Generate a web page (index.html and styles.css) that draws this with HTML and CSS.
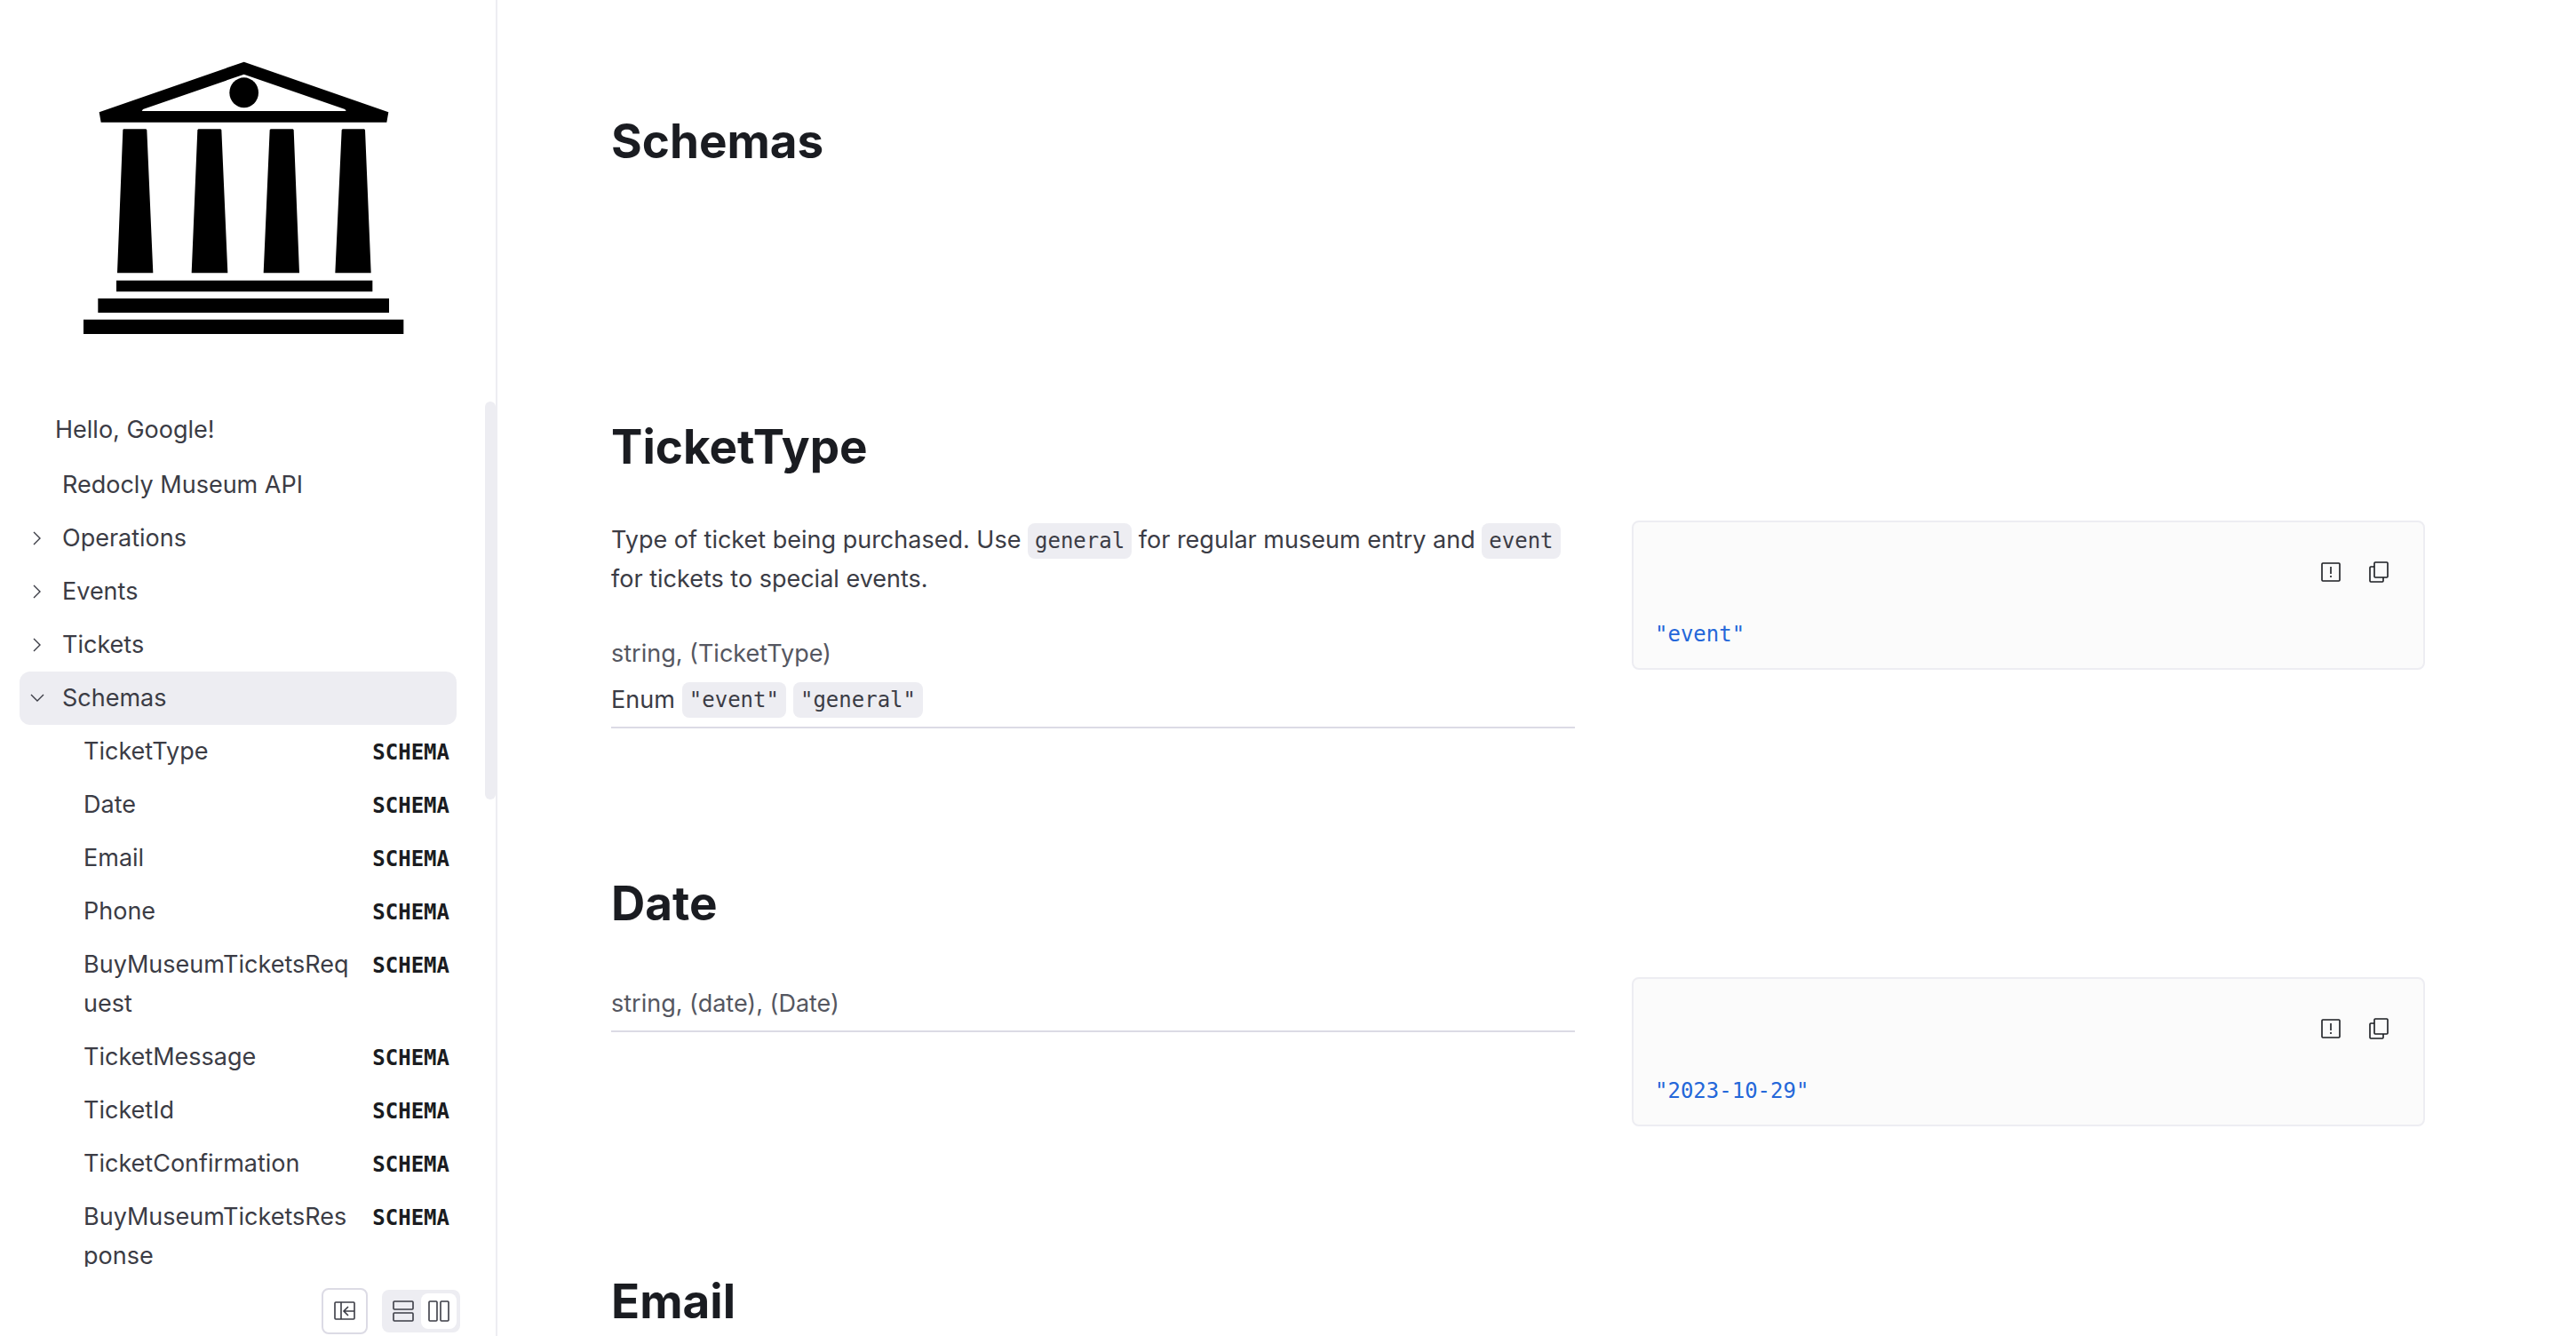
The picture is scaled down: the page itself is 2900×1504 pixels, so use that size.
FILE: index.html
```html
<!DOCTYPE html>
<html lang="en">
<head>
<meta charset="utf-8">
<title>Redocly Museum API</title>
<link rel="stylesheet" href="styles.css">
</head>
<body>
<div class="app">
  <aside class="sidebar">
    <a class="logo" href="#" aria-label="Museum">
      <svg viewBox="0 0 1086 924" aria-hidden="true">
        <path fill-rule="evenodd" d="M545 2 1033 172 1027 206 62 206 56 172ZM545 44 204 162 200 168 890 168 886 162Z"/>
        <ellipse cx="545" cy="106" rx="49" ry="51"/>
        <path d="M138 229H214L217 232 238 715H117L136 232ZM391 229H466L469 232 490 715H368L388 232ZM635 229H710L713 232 732 715H611L632 232ZM878 229H951L954 232 974 715H853L875 232Z"/>
        <path d="M114 740H979V778H114ZM52 801H1035V849H52ZM3 872H1084V921H3Z"/>
      </svg>
    </a>
    <div class="menu-area">
      <nav class="menu">
        <a class="item item-page" href="#">Hello, Google!</a>
        <a class="item item-top" href="#">Redocly Museum API</a>
        <button class="item item-group" type="button"><svg class="chevron" viewBox="0 0 16 16"><path d="M4 1 11 8 4 15"/></svg>Operations</button>
        <button class="item item-group" type="button"><svg class="chevron" viewBox="0 0 16 16"><path d="M4 1 11 8 4 15"/></svg>Events</button>
        <button class="item item-group" type="button"><svg class="chevron" viewBox="0 0 16 16"><path d="M4 1 11 8 4 15"/></svg>Tickets</button>
        <button class="item item-group is-open" type="button" aria-expanded="true"><svg class="chevron" viewBox="0 0 16 16"><path d="M1 4 8 11 15 4"/></svg>Schemas</button>
        <a class="item item-child" href="#tickettype"><span class="name">TicketType</span><span class="badge">SCHEMA</span></a>
        <a class="item item-child" href="#date"><span class="name">Date</span><span class="badge">SCHEMA</span></a>
        <a class="item item-child" href="#email"><span class="name">Email</span><span class="badge">SCHEMA</span></a>
        <a class="item item-child" href="#"><span class="name">Phone</span><span class="badge">SCHEMA</span></a>
        <a class="item item-child" href="#"><span class="name">BuyMuseumTicketsRequest</span><span class="badge">SCHEMA</span></a>
        <a class="item item-child" href="#"><span class="name">TicketMessage</span><span class="badge">SCHEMA</span></a>
        <a class="item item-child" href="#"><span class="name">TicketId</span><span class="badge">SCHEMA</span></a>
        <a class="item item-child" href="#"><span class="name">TicketConfirmation</span><span class="badge">SCHEMA</span></a>
        <a class="item item-child" href="#"><span class="name">BuyMuseumTicketsResponse</span><span class="badge">SCHEMA</span></a>
      </nav>
      <div class="thumb"></div>
    </div>
    <div class="controls">
      <button class="collapse" type="button" aria-label="Collapse sidebar">
        <svg class="icon" viewBox="0 0 24 24"><rect x="1" y="2" width="22" height="19" rx="1"/><path d="M8 2V21M23 12H12M16 7 11 12 16 17"/></svg>
      </button>
      <div class="views">
        <button class="view" type="button" aria-label="Stacked layout">
          <svg class="icon" viewBox="0 0 24 24"><rect x="1" y="1" width="22" height="9" rx="1"/><rect x="1" y="14" width="22" height="9" rx="1"/></svg>
        </button>
        <button class="view is-active" type="button" aria-label="Three panel layout">
          <svg class="icon" viewBox="0 0 24 24"><rect x="1" y="1" width="9" height="22" rx="1"/><rect x="14" y="1" width="9" height="22" rx="1"/></svg>
        </button>
      </div>
    </div>
  </aside>

  <main class="content">
    <section class="intro">
      <h1 class="title">Schemas</h1>
    </section>

    <section class="schema" id="tickettype">
      <h2 class="title">TicketType</h2>
      <div class="columns">
        <div class="details">
          <p class="description">Type of ticket being purchased. Use <code class="chip">general</code> for regular museum entry and <code class="chip">event</code> for tickets to special events.</p>
          <div class="definition">
            <div class="type">string, (TicketType)</div>
            <div class="enum">Enum <code class="chip">"event"</code><code class="chip">"general"</code></div>
          </div>
        </div>
        <div class="sample">
          <div class="tools">
            <button class="tool" type="button" aria-label="Report"><svg class="icon" viewBox="0 0 24 24"><rect x="2" y="2" width="20" height="20" rx="1"/><path d="M12 6V14M12 16V18"/></svg></button>
            <button class="tool" type="button" aria-label="Copy"><svg class="icon" viewBox="0 0 24 24"><rect x="7" y="1" width="15" height="17" rx="1"/><path d="M7 6H3Q2 6 2 7V22Q2 23 3 23H16Q17 23 17 22V18"/></svg></button>
          </div>
          <pre class="value"><code>"event"</code></pre>
        </div>
      </div>
    </section>

    <section class="schema" id="date">
      <h2 class="title">Date</h2>
      <div class="columns">
        <div class="details">
          <div class="definition">
            <div class="type">string, (date), (Date)</div>
          </div>
        </div>
        <div class="sample">
          <div class="tools">
            <button class="tool" type="button" aria-label="Report"><svg class="icon" viewBox="0 0 24 24"><rect x="2" y="2" width="20" height="20" rx="1"/><path d="M12 6V14M12 16V18"/></svg></button>
            <button class="tool" type="button" aria-label="Copy"><svg class="icon" viewBox="0 0 24 24"><rect x="7" y="1" width="15" height="17" rx="1"/><path d="M7 6H3Q2 6 2 7V22Q2 23 3 23H16Q17 23 17 22V18"/></svg></button>
          </div>
          <pre class="value"><code>"2023-10-29"</code></pre>
        </div>
      </div>
    </section>

    <section class="schema" id="email">
      <h2 class="title">Email</h2>
    </section>
  </main>
</div>
</body>
</html>
```
FILE: styles.css
```css
:root {
  --text: #3b3c45;
  --strong: #1a1c21;
  --muted: #555761;
  --tint: #ededf2;
  --line: #dcdbe5;
  --mono: "DejaVu Sans Mono", monospace;
}

* {
  box-sizing: border-box;
}

body {
  margin: 0;
  background: #fff;
  color: var(--text);
  font: 27px/44px Inter, sans-serif;
}

button {
  margin: 0;
  padding: 0;
  border: 0;
  background: none;
  color: inherit;
  font: inherit;
  text-align: left;
}

a {
  color: inherit;
  text-decoration: none;
}

.app {
  display: grid;
  grid-template-columns: 560px 1fr;
  height: 100vh;
  overflow: hidden;
}

/* Sidebar */

.sidebar {
  display: flex;
  flex-direction: column;
  height: 100vh;
  border-right: 2px solid var(--tint);
}

.logo {
  padding: 69px 103px 75px 93px;
}

.logo svg {
  display: block;
  width: 100%;
}

.menu-area {
  position: relative;
  flex: 1;
  min-height: 0;
}

.menu {
  height: 100%;
  padding: 2px 44px 0 22px;
  overflow: hidden;
}

.thumb {
  position: absolute;
  top: 0;
  right: 0;
  width: 12px;
  height: 46%;
  border-radius: 6px;
  background: var(--tint);
}

.item {
  display: flex;
  width: 100%;
  padding: 8px;
  border-radius: 12px;
}

.item-page {
  margin-bottom: 2px;
  padding-left: 40px;
}

.item-top {
  padding-left: 48px;
}

.item-group {
  align-items: center;
  gap: 20px;
  padding-left: 12px;
}

.item-child {
  align-items: baseline;
  gap: 16px;
  padding-left: 72px;
}

.is-open {
  background: var(--tint);
}

.name {
  flex: 1;
  min-width: 0;
  overflow-wrap: anywhere;
}

.badge {
  color: var(--strong);
  font: bold 24px/40px var(--mono);
}

.chevron {
  width: 16px;
  height: 16px;
  fill: none;
  stroke: currentColor;
  stroke-width: 1.4;
}

.controls {
  display: flex;
  align-items: center;
  justify-content: flex-end;
  gap: 16px;
  padding: 24px 40px 2px;
}

.icon {
  display: block;
  width: 24px;
  height: 24px;
  fill: none;
  stroke: currentColor;
  stroke-width: 1.6;
  overflow: visible;
}

.collapse,
.view,
.tool {
  display: grid;
  place-items: center;
}

.collapse {
  width: 52px;
  height: 52px;
  border: 2px solid var(--line);
  border-radius: 8px;
}

.views {
  display: flex;
  padding: 4px;
  border-radius: 8px;
  background: var(--tint);
}

.view {
  width: 40px;
  height: 40px;
  border-radius: 8px;
}

.is-active {
  background: #fff;
}

/* Content */

.content {
  min-width: 0;
  padding: 124px 170px 0 128px;
}

.intro {
  padding-bottom: 274px;
}

.schema {
  padding-bottom: 162px;
}

.title {
  margin: 0;
  color: var(--strong);
  font-size: 53px;
  font-weight: 700;
  line-height: 70px;
}

.columns {
  display: grid;
  grid-template-columns: 1085fr 893fr;
  align-items: start;
  gap: 64px;
  margin-top: 48px;
}

.description {
  margin: 0 0 32px;
}

.definition {
  display: grid;
  gap: 8px;
  padding: 8px 0;
  border-bottom: 2px solid var(--line);
}

.type {
  color: var(--muted);
}

.enum {
  display: flex;
  align-items: center;
  gap: 8px;
}

.chip {
  padding: 6px 8px;
  border-radius: 8px;
  background: var(--tint);
  font: 24px/28px var(--mono);
}

.sample {
  padding: 30px 24px 18px;
  border: 2px solid var(--tint);
  border-radius: 8px;
  background: #fbfbfb;
}

.tools {
  display: flex;
  justify-content: flex-end;
  gap: 2px;
}

.tool {
  width: 52px;
  height: 52px;
  color: var(--strong);
}

.value {
  margin: 24px 0 0;
  color: #2467d9;
  font: 24px/40px var(--mono);
}

.value code {
  font: inherit;
}
```
